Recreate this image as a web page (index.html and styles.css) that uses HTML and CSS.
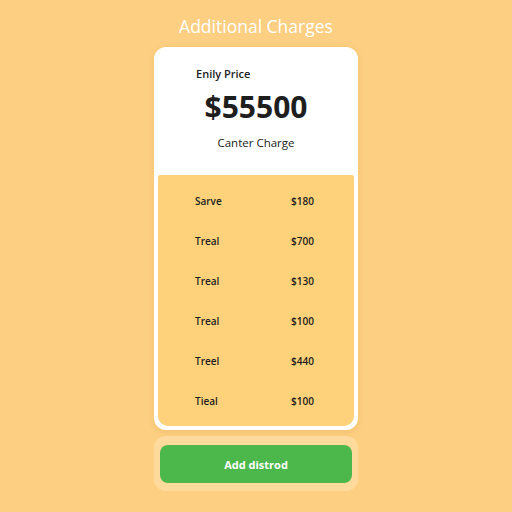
FILE: index.html
```html
<!DOCTYPE html>
<html lang="en">
<head>
  <meta charset="UTF-8">
  <meta name="viewport" content="width=device-width, initial-scale=1.0">
  <title>Additional Charges</title>
  <link rel="stylesheet" href="styles.css">
</head>
<body>
  <h1>Additional Charges</h1>

  <div class="card">
    <div class="summary">
      <div class="label">Enily Price</div>
      <div class="price">$55500</div>
      <div class="sub">Canter Charge</div>
    </div>

    <div class="rows">
      <div class="row"><span>Sarve</span><span>$180</span></div>
      <div class="row"><span>Treal</span><span>$700</span></div>
      <div class="row"><span>Treal</span><span>$130</span></div>
      <div class="row"><span>Treal</span><span>$100</span></div>
      <div class="row"><span>Treel</span><span>$440</span></div>
      <div class="row"><span>Tieal</span><span>$100</span></div>
    </div>
  </div>

  <div class="action">
    <button>Add distrod</button>
  </div>
</body>
</html>
```

FILE: styles.css
```css
body {
  margin: 0;
  height: 512px;
  background: #fdcf82;
  font-family: "Open Sans", Arial, sans-serif;
  display: flex;
  flex-direction: column;
  align-items: center;
}

h1 {
  margin: 14px 0 0;
  font-size: 17.5px;
  font-weight: 500;
  color: #fff;
  line-height: 24px;
}

.card {
  margin-top: 9px;
  width: 196px;
  padding: 0 4px 4px;
  background: #fff;
  border-radius: 12px;
  box-shadow: 0 2px 6px rgba(200, 140, 40, 0.2);
}

.summary {
  height: 128px;
  display: flex;
  flex-direction: column;
  align-items: center;
}

.label {
  align-self: flex-start;
  margin: 19px 0 0 38px;
  font-size: 11px;
  font-weight: 600;
  color: #222;
}

.price {
  margin-top: 6px;
  font-size: 30px;
  font-weight: 700;
  color: #1e1e1e;
  line-height: 40px;
}

.sub {
  margin-top: 8px;
  font-size: 11.5px;
  color: #222;
}

.rows {
  background: #fdd27a;
  border-radius: 2px 2px 10px 10px;
  padding: 6px 0 5px;
}

.row {
  height: 40px;
  display: grid;
  grid-template-columns: 96px auto;
  align-items: center;
  padding-left: 37px;
  font-size: 10px;
  font-weight: 600;
  color: #1c1c1c;
}

.action {
  margin-top: 6px;
  width: 192px;
  padding: 9px 6px 8px;
  background: rgba(255, 230, 180, 0.55);
  border-radius: 12px;
}

.action button {
  width: 100%;
  height: 38px;
  border: none;
  border-radius: 8px;
  background: #4cb84b;
  color: #fff;
  font-family: "Open Sans", Arial, sans-serif;
  font-size: 11px;
  font-weight: 700;
}
```
